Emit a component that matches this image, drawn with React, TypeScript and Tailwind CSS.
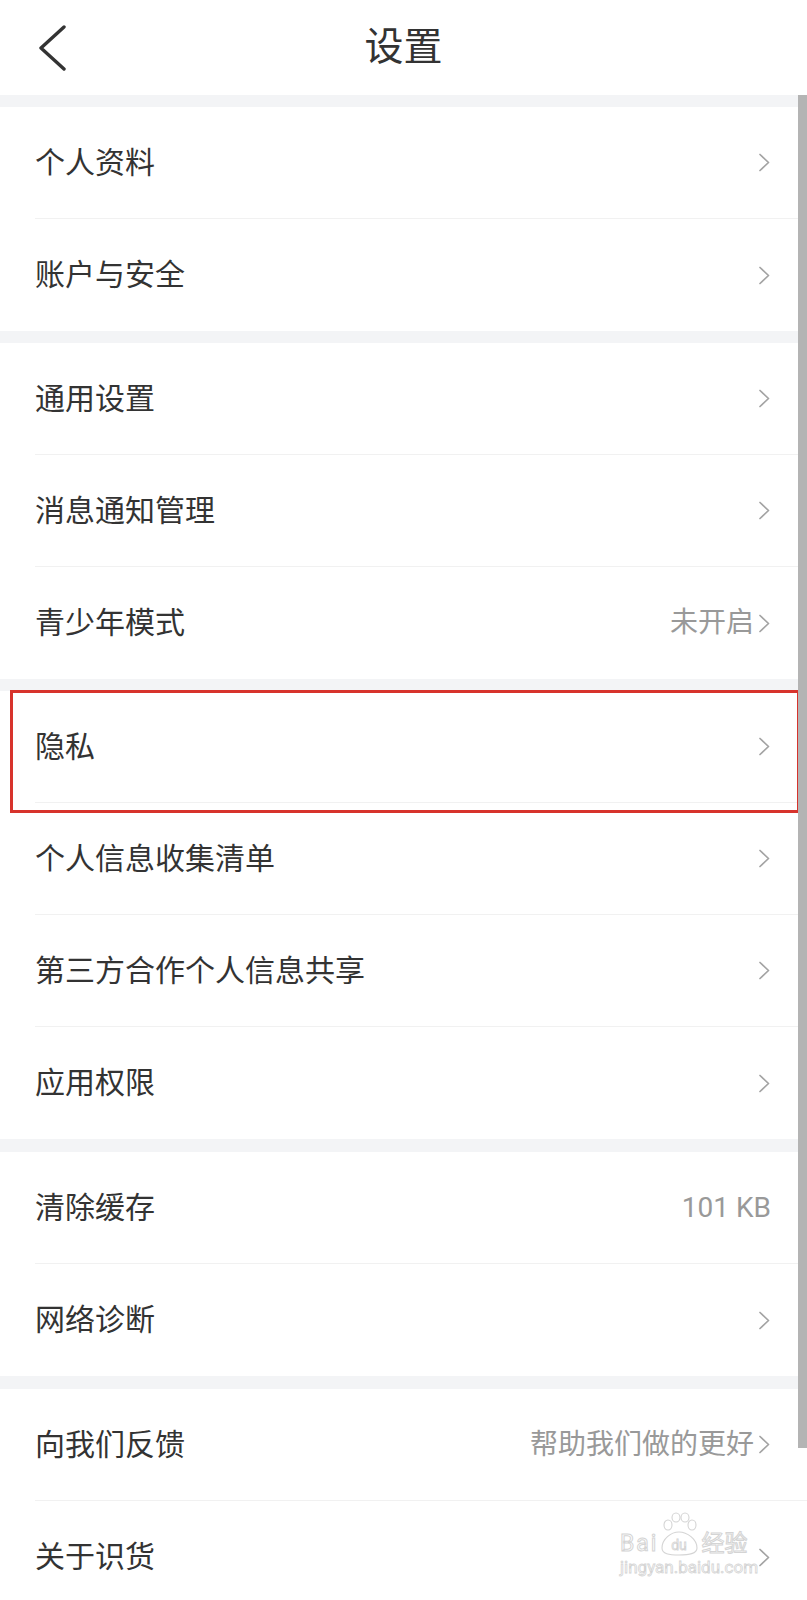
import React from 'react';

type Item = {
  label: string;
  value?: string;
  arrow?: boolean;
  highlight?: boolean;
};

const sections: Item[][] = [
  [{ label: '个人资料', arrow: true }, { label: '账户与安全', arrow: true }],
  [
    { label: '通用设置', arrow: true },
    { label: '消息通知管理', arrow: true },
    { label: '青少年模式', value: '未开启', arrow: true },
  ],
  [
    { label: '隐私', arrow: true, highlight: true },
    { label: '个人信息收集清单', arrow: true },
    { label: '第三方合作个人信息共享', arrow: true },
    { label: '应用权限', arrow: true },
  ],
  [{ label: '清除缓存', value: '101 KB' }, { label: '网络诊断', arrow: true }],
  [
    { label: '向我们反馈', value: '帮助我们做的更好', arrow: true },
    { label: '关于识货', arrow: true },
  ],
];

function Chevron() {
  return (
    <svg width="13" height="19" viewBox="0 0 13 19" fill="none" className="shrink-0">
      <path d="M2 1.5L10.5 9.5L2 17.5" stroke="#a3a3a3" strokeWidth="1.7" strokeLinecap="round" strokeLinejoin="round" />
    </svg>
  );
}

function Row({ item, last }: { item: Item; last: boolean }) {
  return (
    <div className="relative pl-[35px]">
      <div
        className={`h-[112px] flex items-center justify-between pr-[36px] ${last ? '' : 'border-b border-[#f1f1f1]'}`}
      >
        <span className="text-[30px] text-[#333333] leading-none">{item.label}</span>
        <div className="flex items-center gap-[4px]">
          {item.value && <span className="text-[28px] text-[#999999] leading-none">{item.value}</span>}
          {item.arrow && <Chevron />}
        </div>
      </div>
      {/* annotation box */}
      {item.highlight && (
        <div className="absolute z-10 left-[10px] right-[7px] -top-[1px] -bottom-[10px] border-[3px] border-[#d7332c] pointer-events-none" />
      )}
    </div>
  );
}

function Watermark() {
  return (
    <div className="absolute z-10 left-[620px] top-[1512px] w-[150px] flex flex-col items-start pointer-events-none select-none">
      <div className="flex items-end h-[44px]">
        <span className="text-[23px] leading-none text-transparent [-webkit-text-stroke:1px_#d4d4d4] tracking-[2px] mb-[1px]">
          Bai
        </span>
        <svg width="42" height="44" viewBox="0 0 42 44" fill="none">
          <ellipse cx="10" cy="13" rx="4" ry="5" stroke="#d4d4d4" strokeWidth="1.1" />
          <ellipse cx="18" cy="5.5" rx="4" ry="4.5" stroke="#d4d4d4" strokeWidth="1.1" />
          <ellipse cx="27" cy="5.5" rx="4" ry="4.5" stroke="#d4d4d4" strokeWidth="1.1" />
          <ellipse cx="34" cy="13" rx="4" ry="5" stroke="#d4d4d4" strokeWidth="1.1" />
          <path d="M4 36C4 27 13 20 21 20C29 20 39 27 39 36C39 42 31 43 21 43C11 43 4 42 4 36Z" stroke="#d4d4d4" strokeWidth="1.1" />
          <text x="21" y="38" textAnchor="middle" fontSize="14" fontFamily="Roboto, sans-serif" fill="none" stroke="#d4d4d4" strokeWidth="0.8">
            du
          </text>
        </svg>
        <span className="text-[23px] leading-none text-transparent [-webkit-text-stroke:1px_#d4d4d4] ml-[1px] mb-[1px]">经验</span>
      </div>
      <span className="mt-[3px] text-[17px] leading-none text-transparent [-webkit-text-stroke:0.8px_#d4d4d4]">
        jingyan.baidu.com
      </span>
    </div>
  );
}

export default function App() {
  return (
    <div className="relative w-[807px] h-[1600px] overflow-hidden bg-white font-['Roboto','Noto_Sans_CJK_SC',sans-serif]">
      {/* Header */}
      <div className="h-[95px] grid grid-cols-[1fr_auto_1fr] items-center">
        <div className="pl-[38px] flex items-center">
          <svg width="30" height="46" viewBox="0 0 30 46" fill="none">
            <path d="M26 2L3 23L26 44" stroke="#333333" strokeWidth="3.4" strokeLinecap="round" strokeLinejoin="round" />
          </svg>
        </div>
        <h1 className="text-[39px] text-[#333333] leading-none font-normal">设置</h1>
        <div />
      </div>

      {sections.map((section, si) => (
        <div key={si}>
          <div className={`${si >= 3 ? 'h-[13px]' : 'h-[12px]'} bg-[#f3f4f6]`} />
          {section.map((item, i) => (
            <Row key={item.label} item={item} last={i === section.length - 1} />
          ))}
        </div>
      ))}

      {/* scrollbar */}
      <div className="absolute z-20 right-0 top-[95px] w-[9px] h-[1353px] bg-[#b4b4b4]" />

      <Watermark />
    </div>
  );
}
